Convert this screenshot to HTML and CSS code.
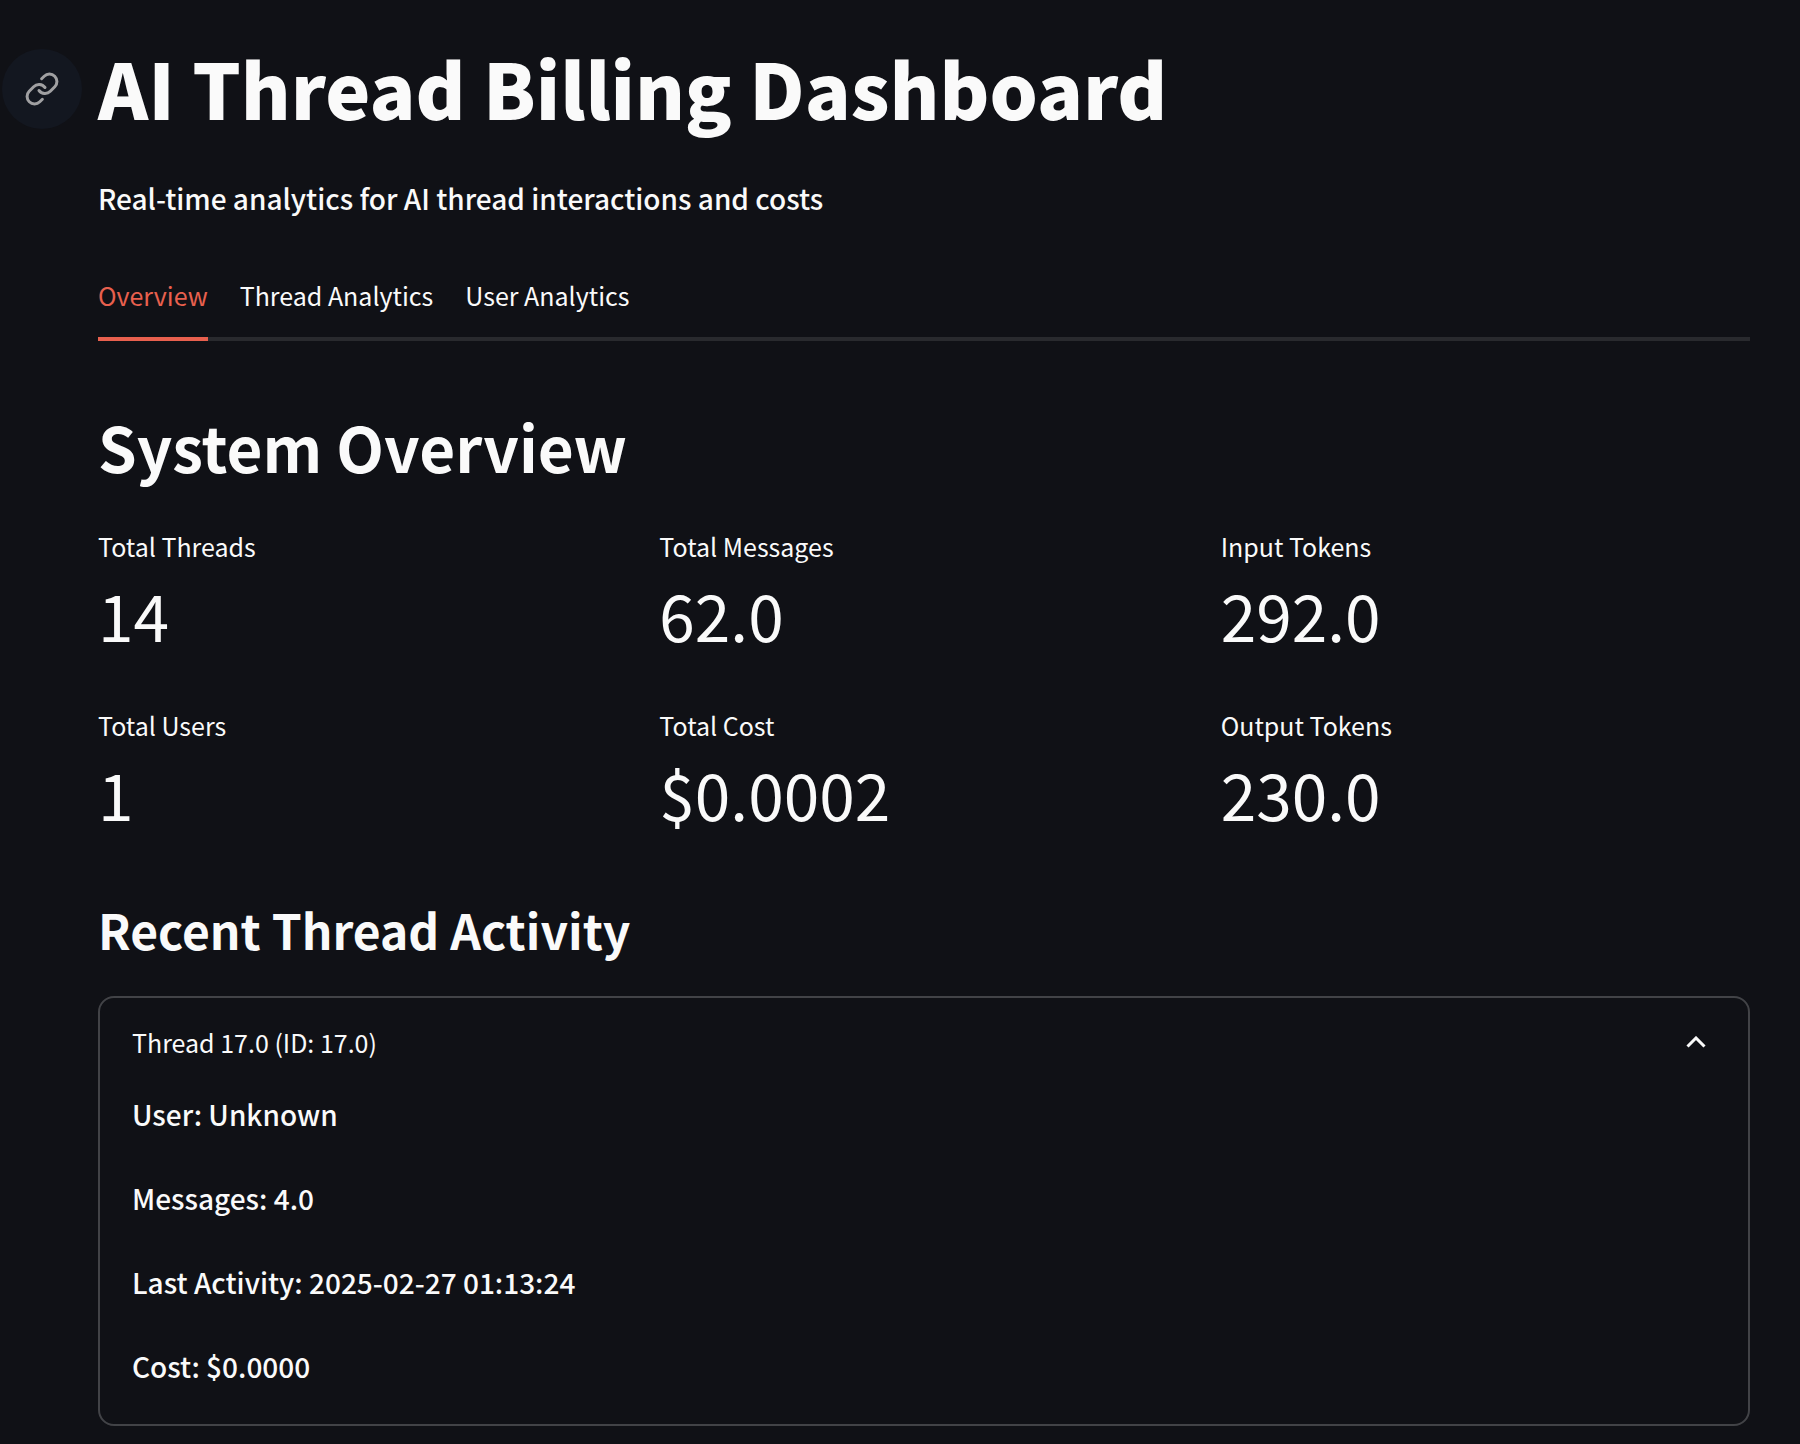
FILE: index.html
```html
<!DOCTYPE html>
<html lang="en">
<head>
<meta charset="utf-8">
<title>AI Thread Billing Dashboard</title>
<link rel="stylesheet" href="styles.css">
</head>
<body>
<main class="page">
  <header class="header">
    <a class="anchor" href="#top" aria-label="Link to heading">
      <svg class="anchor-icon" viewBox="0 0 24 24"><path d="M10 13a5 5 0 0 0 7.54.54l3-3a5 5 0 0 0-7.07-7.07l-1.72 1.71"/><path d="M14 11a5 5 0 0 0-7.54-.54l-3 3a5 5 0 0 0 7.07 7.07l1.71-1.71"/></svg>
    </a>
    <h1 class="title" id="top">AI Thread Billing Dashboard</h1>
  </header>
  <p class="lead">Real-time analytics for AI thread interactions and costs</p>
  <div class="tabs" role="tablist">
    <button class="tab tab-active" role="tab" aria-selected="true">Overview</button>
    <button class="tab" role="tab" aria-selected="false">Thread Analytics</button>
    <button class="tab" role="tab" aria-selected="false">User Analytics</button>
  </div>
  <h2 class="section-title">System Overview</h2>
  <dl class="metrics">
    <div class="metric"><dt class="label">Total Threads</dt><dd class="value">14</dd></div>
    <div class="metric"><dt class="label">Total Messages</dt><dd class="value">62.0</dd></div>
    <div class="metric"><dt class="label">Input Tokens</dt><dd class="value">292.0</dd></div>
    <div class="metric"><dt class="label">Total Users</dt><dd class="value">1</dd></div>
    <div class="metric"><dt class="label">Total Cost</dt><dd class="value">$0.0002</dd></div>
    <div class="metric"><dt class="label">Output Tokens</dt><dd class="value">230.0</dd></div>
  </dl>
  <h3 class="subtitle">Recent Thread Activity</h3>
  <details class="thread" open>
    <summary class="thread-head"><span>Thread 17.0 (ID: 17.0)</span>
      <svg class="chevron" viewBox="0 0 20 12"><path d="M1.5 10.5L10 2l8.500 8.500"/></svg>
    </summary>
    <div class="thread-body">
      <p class="line">User: Unknown</p>
      <p class="line">Messages: 4.0</p>
      <p class="line">Last Activity: 2025-02-27 01:13:24</p>
      <p class="line">Cost: $0.0000</p>
    </div>
  </details>
</main>
</body>
</html>
```

FILE: styles.css
```css
* { box-sizing: border-box; margin: 0; padding: 0; }
body {
  background: #101116;
  color: #fafafa;
  font-family: "Noto Sans CJK SC", "Noto Sans", sans-serif;
  font-weight: 400;
}
.page { padding: 36px 50px 18px 98px; }
.header { display: flex; align-items: center; margin-left: -96px; }
.anchor {
  display: flex; align-items: center; justify-content: center;
  width: 80px; height: 80px; margin-right: 16px; border-radius: 50%;
  background: #131720; color: #a0a0a2;
}
.anchor-icon { width: 36px; height: 36px; fill: none; stroke: currentColor; stroke-width: 2; stroke-linecap: round; stroke-linejoin: round; }
.title { padding-bottom: 4px; font-size: 76px; line-height: 102px; font-weight: 900; }
.lead { margin-top: 30px; font-size: 28px; line-height: 52px; font-weight: 500; }
.tabs { display: flex; gap: 32px; margin-top: 30px; border-bottom: 4px solid #292a2e; }
.tab {
  height: 87px; margin-bottom: -4px; padding-bottom: 2px; border: 0; border-bottom: 4px solid transparent;
  background: none; color: inherit; font: inherit; font-size: 25px; cursor: pointer;
}
.tab-active { color: #e8604e; border-color: #e8604e; }
.section-title { margin-top: 65px; font-size: 62px; line-height: 80px; font-weight: 700; }
.metrics { display: grid; grid-template-columns: repeat(3, 1fr); gap: 43px 32px; margin-top: 39px; }
.label { font-size: 25px; line-height: 42px; }
.value { font-size: 64px; line-height: 94px; }
.subtitle { margin-top: 59px; font-size: 48px; line-height: 60px; font-weight: 700; }
.thread { margin-top: 37px; border: 2px solid #424347; border-radius: 16px; }
.thread-head { display: flex; justify-content: space-between; align-items: center; padding: 22px 42px 24px 32px; font-size: 25px; line-height: 44px; list-style: none; cursor: pointer; }
.chevron { width: 20px; height: 12px; fill: none; stroke: currentColor; stroke-width: 3; }
.thread-body { display: grid; gap: 32px; padding: 0 32px 32px; }
.line { font-size: 28px; line-height: 52px; font-weight: 500; }
```
